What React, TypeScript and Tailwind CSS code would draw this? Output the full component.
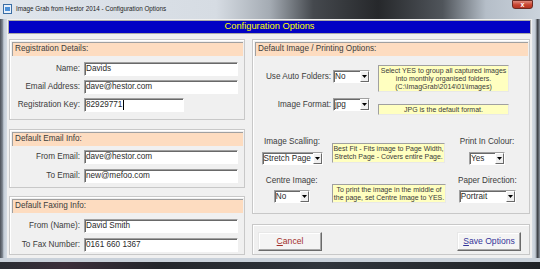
import React from 'react'

const sunken =
  'bg-white border border-t-[#a0a0a0] border-l-[#a0a0a0] border-b-white border-r-white shadow-[inset_1px_1px_0_#696969]'

const Header = ({ title }: { title: string }) => (
  <div className="ml-[2px] mr-[1px] mt-[2px] h-[14px] bg-[#fddcc0] border-t border-l border-t-[#a0a0a0] border-l-[#a0a0a0] pl-[2px] flex items-center text-[8.2px] text-[#3c3c3c] leading-none">
    {title}
  </div>
)

const Field = ({ label, value, w, caret }: { label: string; value: string; w: string; caret?: boolean }) => (
  <div className="flex items-center h-[14px]">
    <div className="w-[70px] text-right text-[8.2px] text-[#3c3c3c] leading-none">{label}</div>
    <div className={`ml-[4px] h-[14px] ${w} ${sunken} flex items-center pl-[1px] text-[8.2px] text-[#2a2a2a] leading-none`}>
      {value}
      {caret && <span className="ml-[1px] w-[1px] h-[10px] bg-black" />}
    </div>
  </div>
)

const Select = ({ value, w }: { value: string; w: string }) => (
  <div className={`h-[13px] ${w} ${sunken} flex items-stretch`}>
    <span className="flex-1 pl-[1px] text-[8.2px] leading-[11px] text-[#2a2a2a] overflow-hidden whitespace-nowrap">{value}</span>
    <span className="w-[9px] bg-[#f0f0f0] border border-t-white border-l-white border-b-[#696969] border-r-[#696969] flex items-center justify-center">
      <svg width="5" height="3" viewBox="0 0 5 3">
        <path d="M0 0h5L2.5 3z" fill="#000" />
      </svg>
    </span>
  </div>
)

const Note = ({ lines, className }: { lines: string[]; className: string }) => (
  <div
    className={`${className} bg-[#ffffc0] border border-t-[#a0a0a0] border-l-[#a0a0a0] border-b-[#e8e8e8] border-r-[#e8e8e8] flex flex-col justify-center items-center text-[7px] leading-[8px] text-[#3a3a3a]`}
  >
    {lines.map((l) => (
      <div key={l} className="whitespace-nowrap">{l}</div>
    ))}
  </div>
)

const Panel = ({ className, children }: { className: string; children: React.ReactNode }) => (
  <div className={`border border-[#c8c8c8] shadow-[inset_1px_1px_0_#fff] ${className}`}>{children}</div>
)

const Label = ({ children }: { children: React.ReactNode }) => (
  <div className="h-[10px] leading-[10px] text-[8.2px] text-[#3c3c3c] whitespace-nowrap">{children}</div>
)

const Button = ({ children, color }: { children: React.ReactNode; color: string }) => (
  <div
    className={`w-[64px] h-[19px] bg-[#f4f4f4] border border-t-[#e8e8e8] border-l-[#e8e8e8] border-b-[#6a6a6a] border-r-[#6a6a6a] shadow-[inset_-1px_-1px_0_#a8a8a8,inset_1px_1px_0_#fff] flex items-center justify-center text-[8.6px] leading-none ${color}`}
  >
    {children}
  </div>
)

export default function App() {
  return (
    <div className="w-[540px] h-[269px] overflow-hidden flex flex-col font-['Liberation_Sans',Arial,sans-serif] bg-[#c6cfd9]">
      {/* window title bar */}
      <div className="h-[19px] flex items-start bg-[linear-gradient(to_right,#dfe5ec_0%,#d6dce3_40%,#a4abb3_50%,#45494e_58%,#26282b_70%,#50555b_82%,#b5bec8_90%,#cbd3dc_100%)]">
        <svg className="ml-[3px] mt-[4px]" width="9" height="10" viewBox="0 0 9 10">
          <rect x="0.5" y="0.5" width="8" height="9" fill="#e8f0fa" stroke="#3a6ea5" />
          <rect x="2" y="3" width="5" height="4" fill="#4a90d9" />
        </svg>
        <span className="ml-[4px] mt-[4px] text-[6.3px] leading-[10px] text-[#1c1c1c]">
          Image Grab from Hestor 2014 - Configuration Options
        </span>
        <div className="ml-auto mr-[7px] w-[21px] h-[9px] rounded-b-[3px] border border-[#6b2a22] bg-[linear-gradient(#e08a7c,#c8432f_55%,#b33422)] flex items-center justify-center text-white text-[7px] leading-none font-bold">
          x
        </div>
      </div>

      <div className="flex h-[239px]">
        <div className="w-[7px] bg-[linear-gradient(to_right,#4b5058_0%,#7d858f_35%,#c5ced8_55%,#d5dce4_100%)]" />

        {/* client area */}
        <div className="w-[525px] bg-[#f0f0f0] flex flex-col">
          <div className="mx-[1px] mt-[1px] h-[14px] border border-[#a8a8a8] bg-[#0202c4] flex items-center justify-center text-[9.3px] leading-none text-[#ffff00]">
            Configuration Options
          </div>

          <div className="flex gap-[7px] pl-[2px] mt-[5px]">
            {/* left column */}
            <div className="w-[236px] flex flex-col">
              <Panel className="h-[81px]">
                <Header title="Registration Details:" />
                <div className="mt-[6px] flex flex-col gap-[4px]">
                  <Field label="Name:" value="Davids" w="w-[154px]" />
                  <Field label="Email Address:" value="dave@hestor.com" w="w-[154px]" />
                  <Field label="Registration Key:" value="82929771" w="w-[100px]" caret />
                </div>
              </Panel>
              <Panel className="h-[59px] mt-[9px]">
                <Header title="Default Email Info:" />
                <div className="mt-[4px] flex flex-col gap-[5px]">
                  <Field label="From Email:" value="dave@hestor.com" w="w-[154px]" />
                  <Field label="To Email:" value="new@mefoo.com" w="w-[154px]" />
                </div>
              </Panel>
              <Panel className="h-[59px] mt-[8px]">
                <Header title="Default Faxing Info:" />
                <div className="mt-[6px] flex flex-col gap-[5px]">
                  <Field label="From (Name):" value="David Smith" w="w-[154px]" />
                  <Field label="To Fax Number:" value="0161 660 1367" w="w-[154px]" />
                </div>
              </Panel>
            </div>

            {/* right column */}
            <div className="w-[278px] flex flex-col">
              <Panel className="h-[175px]">
                <Header title="Default Image / Printing Options:" />
                <div className="mt-[9px] flex items-start">
                  <div className="w-[78px] mt-[5px] h-[13px] leading-[13px] text-right text-[8.2px] text-[#3c3c3c]">Use Auto Folders:</div>
                  <div className="ml-[2px] mt-[5px]">
                    <Select value="No" w="w-[37px]" />
                  </div>
                  <Note
                    className="ml-[8px] w-[131px] h-[27px]"
                    lines={[
                      'Select YES to group all captured images',
                      'into monthly organised folders.',
                      '(C:\\ImagGrab\\2014\\01\\images)',
                    ]}
                  />
                </div>
                <div className="mt-[6px] flex items-start">
                  <div className="w-[78px] h-[13px] leading-[13px] text-right text-[8.2px] text-[#3c3c3c]">Image Format:</div>
                  <div className="ml-[2px]">
                    <Select value="jpg" w="w-[37px]" />
                  </div>
                  <Note className="ml-[8px] mt-[6px] w-[131px] h-[11px]" lines={['JPG is the default format.']} />
                </div>

                <div className="mt-[22px] flex items-start">
                  <div className="w-[78px] flex flex-col items-center">
                    <Label>Image Scalling:</Label>
                    <div className="mt-[5px]">
                      <Select value="Stretch Page" w="w-[61px]" />
                    </div>
                  </div>
                  <Note
                    className="ml-[1px] mt-[6px] w-[113px] h-[20px]"
                    lines={['Best Fit - Fits image to Page Width,', 'Stretch Page - Covers entire Page.']}
                  />
                  <div className="w-[84px] flex flex-col items-center">
                    <Label>Print In Colour:</Label>
                    <div className="mt-[5px]">
                      <Select value="Yes" w="w-[36px]" />
                    </div>
                  </div>
                </div>

                <div className="mt-[11px] flex items-start">
                  <div className="w-[78px] flex flex-col items-center">
                    <Label>Centre Image:</Label>
                    <div className="mt-[4px]">
                      <Select value="No" w="w-[36px]" />
                    </div>
                  </div>
                  <Note
                    className="ml-[2px] mt-[8px] w-[114px] h-[19px]"
                    lines={['To print the image in the middle of', 'the page, set Centre Image to YES.']}
                  />
                  <div className="w-[84px] flex flex-col items-center">
                    <Label>Paper Direction:</Label>
                    <div className="mt-[4px]">
                      <Select value="Portrait" w="w-[57px]" />
                    </div>
                  </div>
                </div>
              </Panel>

              <Panel className="h-[31px] mt-[10px] pt-[7px] pl-[5px] pr-[8px] flex items-start justify-between">
                <Button color="text-[#a3302a]">
                  <span className="underline">C</span>ancel
                </Button>
                <Button color="text-[#35359a]">
                  <span className="underline">S</span>ave Options
                </Button>
              </Panel>
            </div>
          </div>
        </div>

        <div className="flex-1 bg-[linear-gradient(to_right,#d5dce4_0%,#c3ccd6_40%,#3b3f45_70%,#8f98a3_100%)]" />
      </div>

      <div className="h-[4px] bg-[#c9d1da]" />
      <div className="flex-1 bg-[linear-gradient(to_right,#2a2d33_0%,#3b2e3a_12%,#23262b_30%,#30353c_60%,#1f2226_100%)]" />
    </div>
  )
}
